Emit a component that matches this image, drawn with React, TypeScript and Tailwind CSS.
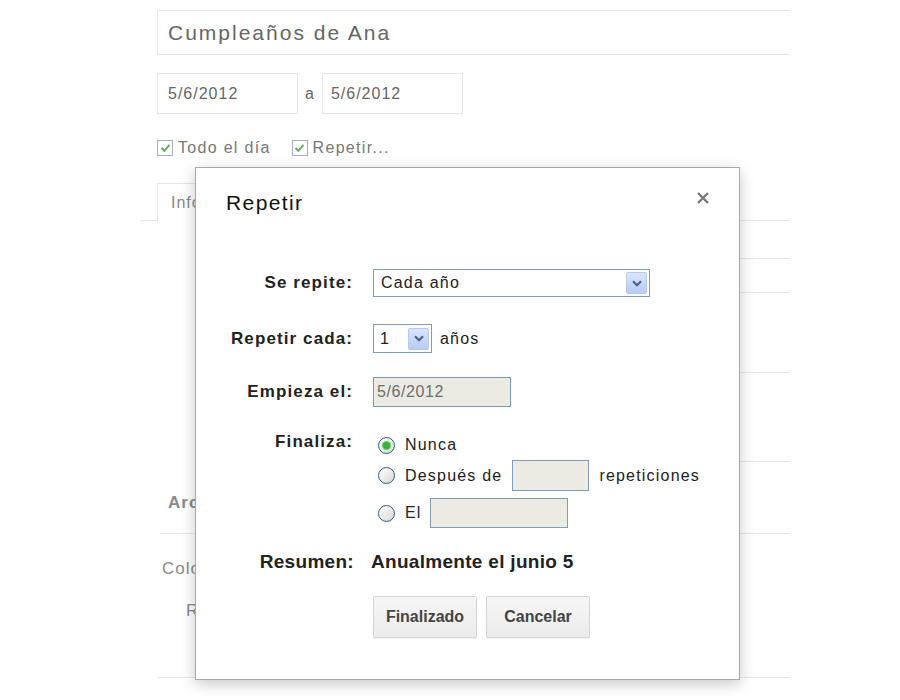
const font = { fontFamily: '"Liberation Sans", Arial, sans-serif' };

const Chevron = () => (
  <svg width="10" height="7" viewBox="0 0 10 7">
    <path d="M1 1.2 L5 5.2 L9 1.2" fill="none" stroke="#4d6185" strokeWidth="2.2" />
  </svg>
);

const ArrowBox = () => (
  <div className="flex h-[22px] w-[21px] items-center justify-center rounded-[2px] border border-[#b5c8f0] bg-gradient-to-b from-[#dbe5fd] to-[#b7cbf6]">
    <Chevron />
  </div>
);

const Radio = ({ checked = false }: { checked?: boolean }) => (
  <div className="flex h-[17px] w-[17px] items-center justify-center rounded-full border border-[#2a5a8a] bg-gradient-to-br from-[#ffffff] to-[#d8d8d2]">
    {checked && <div className="h-[7px] w-[7px] rounded-full bg-[#2fb52f] ring-1 ring-[#65d065]" />}
  </div>
);

const GreenCheck = () => (
  <div className="flex h-[16px] w-[16px] items-center justify-center border border-[#a6b2ba] bg-white">
    <svg width="11" height="10" viewBox="0 0 11 10">
      <path d="M1.5 5 L4.3 7.8 L9.5 1.8" fill="none" stroke="#5fae5f" strokeWidth="2" />
    </svg>
  </div>
);

const Label = ({ children }: { children: React.ReactNode }) => (
  <div className="w-[157px] shrink-0 text-right text-[17px] font-bold tracking-[1.1px] text-[#222]">{children}</div>
);

function RepeatDialog() {
  return (
    <div className="absolute left-[195px] top-[167px] h-[513px] w-[545px] border border-[#a9a9a9] bg-white shadow-[0_4px_14px_rgba(0,0,0,0.22)]">
      <div className="flex items-start justify-between pl-[30px] pr-[29px] pt-[23px]">
        <h2 className="text-[21px] leading-[24px] tracking-[1.4px] text-[#111]">Repetir</h2>
        <svg width="14" height="14" viewBox="0 0 14 14">
          <path d="M2 2 L12 12 M12 2 L2 12" stroke="#7a7a7a" strokeWidth="2.4" />
        </svg>
      </div>

      <div className="mt-[54px] flex flex-col text-[16px] tracking-[1.2px] text-[#222]">
        <div className="flex h-[28px] items-center gap-[20px]">
          <Label>Se repite:</Label>
          <div className="flex h-[28px] w-[277px] items-center justify-between border border-[#7f9db9] bg-white pl-[7px] pr-[2px]">
            <span>Cada año</span>
            <ArrowBox />
          </div>
        </div>

        <div className="mt-[27px] flex h-[29px] items-center gap-[20px]">
          <Label>Repetir cada:</Label>
          <div className="flex items-center gap-[8px]">
            <div className="flex h-[29px] w-[59px] items-center justify-between border border-[#7f9db9] bg-white pl-[6px] pr-[2px]">
              <span>1</span>
              <ArrowBox />
            </div>
            <span>años</span>
          </div>
        </div>

        <div className="mt-[24px] flex h-[30px] items-center gap-[20px]">
          <Label>Empieza el:</Label>
          <div className="flex h-[30px] w-[138px] items-center border border-[#7f9db9] bg-[#ebebe4] pl-[3px] tracking-[0.6px] text-[#6d6d6d]">
            5/6/2012
          </div>
        </div>

        <div className="mt-[26px] flex items-start gap-[20px]">
          <div className="leading-[18px]">
            <Label>Finaliza:</Label>
          </div>
          <div className="flex flex-col pl-[5px]">
            <div className="flex h-[24px] items-center gap-[10px]">
              <Radio checked />
              <span>Nunca</span>
            </div>
            <div className="mt-[3px] flex h-[31px] items-center gap-[10px]">
              <Radio />
              <span>Después de</span>
              <div className="h-[31px] w-[77px] border border-[#7f9db9] bg-[#ebebe4]" />
              <span>repeticiones</span>
            </div>
            <div className="mt-[7px] flex h-[30px] items-center gap-[10px]">
              <Radio />
              <span>El</span>
              <div className="-ml-[2px] h-[30px] w-[138px] border border-[#7f9db9] bg-[#ebebe4]" />
            </div>
          </div>
        </div>

        <div className="mt-[23px] flex h-[22px] items-center gap-[17px] text-[19px] font-bold tracking-[0.3px] text-[#222]">
          <div className="w-[158px] text-right">Resumen:</div>
          <span>Anualmente el junio 5</span>
        </div>

        <div className="mt-[23px] flex gap-[9px] pl-[177px] tracking-normal">
          <button className="h-[42px] w-[104px] rounded-[2px] border border-[#d4d4d4] bg-gradient-to-b from-[#f6f6f6] to-[#ececec] text-[16px] font-bold text-[#444] shadow-[0_1px_1px_rgba(0,0,0,0.06)]">
            Finalizado
          </button>
          <button className="h-[42px] w-[104px] rounded-[2px] border border-[#d4d4d4] bg-gradient-to-b from-[#f6f6f6] to-[#ececec] text-[16px] font-bold text-[#444] shadow-[0_1px_1px_rgba(0,0,0,0.06)]">
            Cancelar
          </button>
        </div>
      </div>
    </div>
  );
}

export default function App() {
  return (
    <div className="relative h-[700px] w-[900px] overflow-hidden bg-white" style={font}>
      <div className="w-[790px] pl-[157px] pt-[10px] text-[#777]">
        <div className="flex h-[45px] items-center border-y border-l border-[#e6e6e6] pl-[10px] text-[21px] tracking-[2px] text-[#666]">
          Cumpleaños de Ana
        </div>

        <div className="mt-[18px] flex items-center text-[16px] tracking-[1px] text-[#666]">
          <div className="flex h-[41px] w-[141px] items-center border border-[#e6e6e6] pl-[10px]">5/6/2012</div>
          <span className="mx-[7px]">a</span>
          <div className="flex h-[41px] w-[141px] items-center border border-[#e6e6e6] pl-[8px]">5/6/2012</div>
        </div>

        <div className="mt-[22px] flex items-center text-[16px] tracking-[1.3px] text-[#777]">
          <GreenCheck />
          <span className="ml-[5px]">Todo el día</span>
          <div className="ml-[21px]">
            <GreenCheck />
          </div>
          <span className="ml-[5px]">Repetir...</span>
        </div>

        <div className="-ml-[17px] mt-[23px] flex h-[38px]">
          <div className="w-[17px] border-b border-[#e6e6e6]" />
          <div className="flex w-[52px] items-center overflow-hidden border-x border-t border-[#e6e6e6] pl-[13px] text-[16px] tracking-[1px] text-[#888]">
            Info
          </div>
          <div className="flex-1 border-b border-[#e6e6e6]" />
        </div>

        <div className="ml-[43px] h-[38px] border-b border-[#e6e6e6]" />
        <div className="ml-[43px] h-[34px] border-b border-[#e6e6e6]" />
        <div className="ml-[43px] h-[80px] border-b border-[#e6e6e6]" />
        <div className="ml-[43px] h-[89px] border-b border-[#e6e6e6]" />
        <div className="ml-[3px] flex h-[72px] items-end border-b border-[#e6e6e6] pb-[18px] pl-[8px] text-[17px] font-bold tracking-[1px] text-[#8a8a8a]">
          Archivos
        </div>
        <div className="h-[144px] border-b border-[#e6e6e6] text-[17px] tracking-[1px] text-[#8a8a8a]">
          <div className="pl-[5px] pt-[22px]">Color</div>
          <div className="pl-[29px] pt-[16px]">Rojo</div>
        </div>
      </div>

      <RepeatDialog />
    </div>
  );
}
